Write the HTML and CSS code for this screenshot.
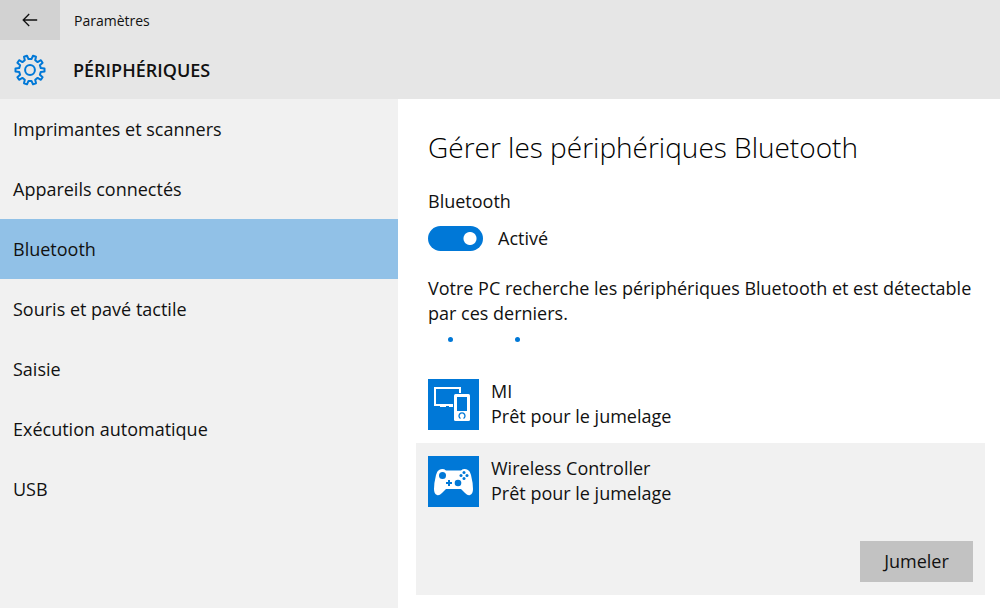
FILE: index.html
```html
<!DOCTYPE html>
<html lang="fr">
<head>
<meta charset="utf-8">
<title>Paramètres</title>
<meta name="viewport" content="width=device-width, initial-scale=1">
<link rel="stylesheet" href="styles.css">
</head>
<body>
<header class="header">
  <div class="titlebar">
    <button class="back" type="button" aria-label="Retour">
      <svg width="16" height="14" viewBox="0 0 16 14" fill="none" stroke="#111" stroke-width="1.3"><path d="M15.2 7H1.2M7.2 1 1.2 7l6 6"/></svg>
    </button>
    <span class="app-name">Paramètres</span>
  </div>
  <div class="section">
    <svg width="32" height="32" viewBox="-16 -16 32 32" fill="none" stroke="#0078d7" stroke-width="2" stroke-linejoin="round"><path d="M1.500 -10.900L3 -14.300L6 -13.300L5.200 -9.700L7.600 -7.900L10.900 -9.800L12.600 -7.300L9.900 -4.800L10.800 -1.900L14.500 -1.500V1.500L10.800 1.900L9.900 4.800L12.600 7.300L10.900 9.800L7.600 7.900L5.200 9.700L6 13.300L3 14.300L1.500 10.900H-1.500L-3 14.300L-6 13.300L-5.200 9.700L-7.600 7.900L-10.900 9.800L-12.600 7.300L-9.900 4.800L-10.800 1.900L-14.500 1.500V-1.500L-10.800 -1.900L-9.900 -4.800L-12.600 -7.300L-10.900 -9.800L-7.600 -7.900L-5.200 -9.700L-6 -13.300L-3 -14.300L-1.500 -10.900Z"/><circle r="4.900"/></svg>
    <h1 class="section-title">PÉRIPHÉRIQUES</h1>
  </div>
</header>
<div class="layout">
  <nav class="sidebar">
    <a class="item" href="#">Imprimantes et scanners</a>
    <a class="item" href="#">Appareils connectés</a>
    <a class="item active" href="#" aria-current="page">Bluetooth</a>
    <a class="item" href="#">Souris et pavé tactile</a>
    <a class="item" href="#">Saisie</a>
    <a class="item" href="#">Exécution automatique</a>
    <a class="item" href="#">USB</a>
  </nav>
  <main class="content">
    <h2 class="title">Gérer les périphériques Bluetooth</h2>
    <label class="label" for="bt">Bluetooth</label>
    <div class="toggle">
      <input class="switch" type="checkbox" role="switch" id="bt" checked>
      <span>Activé</span>
    </div>
    <p class="status">Votre PC recherche les périphériques Bluetooth et est détectable par ces derniers.</p>
    <div class="progress"><i class="dot"></i><i class="dot"></i></div>
    <ul class="devices">
      <li class="device">
        <div class="summary">
          <svg width="51" height="51" viewBox="0 0 51 51"><path fill="#0078d7" d="M0 0h51v51H0z"/><path fill="none" stroke="#fff" stroke-width="2" d="M25 26H7V9h25v5"/><path fill="#fff" d="M12 26h6v2h-6zM21 26h4v2h-4z"/><rect x="26" y="15" width="16" height="27" rx="1.500" fill="#fff"/><path fill="#0078d7" d="M29 18h10v14H29z"/><path fill="none" stroke="#0078d7" stroke-width="1.300" d="M32.500 39.500a3 3 0 1 1 3 0"/></svg>
          <div class="info"><span>MI</span><span>Prêt pour le jumelage</span></div>
        </div>
      </li>
      <li class="device selected">
        <div class="summary">
          <svg width="51" height="51" viewBox="0 0 51 51"><path fill="#0078d7" d="M0 0h51v51H0z"/><path fill="#fff" d="M11 14Q15 12 18 14.500H33Q36 12 40 14Q42 15 43 19Q45 27 45 33Q45 38 42 39Q40 40 37 37L33 33H18L14 37Q11 40 9 39Q6 38 6 33Q6 27 8 19Q9 15 11 14Z"/><g fill="#0078d7"><circle cx="14.500" cy="19.500" r="3.500"/><circle cx="30" cy="27" r="3.300"/><path d="M20 24h2v2h2v2h-2v2h-2v-2h-2v-2h2z"/><circle cx="36" cy="16.500" r="1.500"/><circle cx="33" cy="19.500" r="1.500"/><circle cx="39" cy="19.500" r="1.500"/><circle cx="36" cy="22.500" r="1.500"/></g></svg>
          <div class="info"><span>Wireless Controller</span><span>Prêt pour le jumelage</span></div>
        </div>
        <button class="pair" type="button">Jumeler</button>
      </li>
    </ul>
  </main>
</div>
</body>
</html>
```

FILE: styles.css
```css
* { box-sizing: border-box; }

body {
  margin: 0;
  min-height: 100vh;
  display: flex;
  flex-direction: column;
  font: 18px/25px "Open Sans", "Noto Sans", sans-serif;
  color: #111;
  background: #fff;
}

.header { background: #e6e6e6; padding-bottom: 9px; }
.titlebar { display: flex; align-items: center; gap: 14px; }
.back {
  display: grid;
  place-items: center;
  width: 60px;
  height: 40px;
  padding: 0;
  border: 0;
  background: #d2d2d2;
}
.app-name { font-size: 14px; }
.section { display: flex; align-items: center; gap: 27px; height: 50px; padding: 10px 14px 0; }
.section-title { margin: 0; font-size: 18px; font-weight: 600; }

.layout { flex: 1; display: grid; grid-template-columns: 398fr 602fr; }
.sidebar { background: #f1f1f1; }
.item {
  display: flex;
  align-items: center;
  height: 60px;
  padding: 0 13px;
  color: inherit;
  text-decoration: none;
}
.active { background: #91c1e7; }

.content { padding: 26px 15px 13px 18px; }
.title { margin: 0 12px 20px; font-size: 28px; line-height: 44px; font-weight: 300; color: #000; }
.label { display: block; margin: 0 12px 12px; }
.toggle { display: flex; align-items: center; gap: 15px; margin: 0 12px 25px; }
.switch {
  appearance: none;
  width: 55px;
  height: 25px;
  margin: 0;
  border-radius: 13px;
  background: radial-gradient(circle at 42px 50%, #fff 6px, transparent 7px) #0078d7;
}
.status { margin: 0 12px; }
.progress { display: flex; gap: 62px; padding: 11px 32px 0; }
.dot { width: 5px; height: 5px; border-radius: 50%; background: #0078d7; }

.devices { margin: 24px 0 0; padding: 0; list-style: none; }
.device { display: flex; flex-direction: column; gap: 34px; padding: 13px 12px; }
.summary { display: flex; gap: 12px; }
.selected { background: #f1f1f1; }
.info { display: flex; flex-direction: column; }
.pair {
  align-self: flex-end;
  width: 113px;
  height: 41px;
  border: 0;
  background: #c2c2c2;
  color: inherit;
  font: inherit;
}
```
